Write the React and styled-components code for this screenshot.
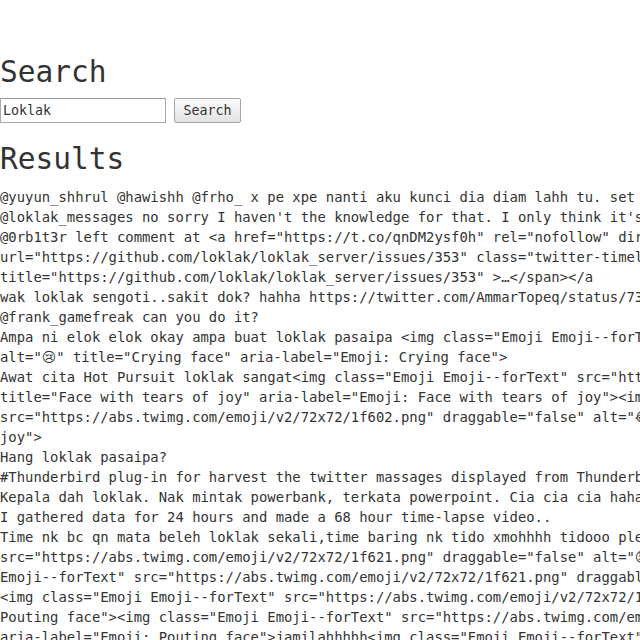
import React from "react";
import styled, { createGlobalStyle } from "styled-components";

const GlobalStyle = createGlobalStyle`
  html, body {
    margin: 0;
    padding: 0;
    background: #ffffff;
  }
  body {
    font-family: "DejaVu Sans Mono", monospace;
    color: #333333;
    overflow: hidden;
  }
`;

const Page = styled.main`
  display: flex;
  flex-direction: column;
  padding-top: 55px;
`;

const Heading = styled.h1`
  margin: 0;
  font-family: "DejaVu Sans Mono", monospace;
  font-weight: normal;
  font-size: 29.5px;
  line-height: 35px;
  color: #333333;
`;

const SearchForm = styled.form`
  display: flex;
  align-items: center;
  gap: 8px;
  margin: 8px 0 19px;
`;

const TextInput = styled.input`
  box-sizing: border-box;
  width: 166px;
  height: 25px;
  margin: 0;
  padding: 1px 2px;
  border: 1px solid #a9a9a9;
  border-top-color: #9a9a9a;
  background: #ffffff;
  font-family: "DejaVu Sans Mono", monospace;
  font-size: 13.333px;
  color: #333333;
  outline: none;
`;

const Button = styled.button`
  box-sizing: border-box;
  width: 67px;
  height: 25px;
  margin: 0;
  padding: 0 6px;
  border: 1px solid #a6a6a6;
  border-radius: 2px;
  background: linear-gradient(#fcfcfc, #e2e2e2);
  font-family: "DejaVu Sans Mono", monospace;
  font-size: 13.333px;
  color: #333333;
`;

const ResultList = styled.div`
  display: flex;
  flex-direction: column;
  margin-top: 10px;
  overflow: hidden;
`;

const Tweet = styled.div`
  white-space: pre;
  font-family: "DejaVu Sans Mono", "DejaVu Sans", monospace;
  font-variant-emoji: text;
  font-size: 13.88px;
  line-height: 20px;
  color: #333333;
`;

const CRY = "\u{1F622}\uFE0E";
const JOY = "\u{1F602}\uFE0E";
const POUT = "\u{1F621}\uFE0E";

const tweets = [
  "@yuyun_shhrul @hawishh @frho_ x pe xpe nanti aku kunci dia diam lahh tu. set kan je",
  "@loklak_messages no sorry I haven't the knowledge for that. I only think it's possible",
  '@0rb1t3r left comment at <a href="https://t.co/qnDM2ysf0h" rel="nofollow" dir="ltr" data-expanded-\nurl="https://github.com/loklak/loklak_server/issues/353" class="twitter-timeline-link" target="_blank"\ntitle="https://github.com/loklak/loklak_server/issues/353" >…</span></a',
  "wak loklak sengoti..sakit dok? hahha https://twitter.com/AmmarTopeq/status/731962528490799104",
  "@frank_gamefreak can you do it?",
  `Ampa ni elok elok okay ampa buat loklak pasaipa <img class="Emoji Emoji--forText" src="https://abs.twimg.com/emoji/v2/72x72/1f622.png" draggable="false"\nalt="${CRY}" title="Crying face" aria-label="Emoji: Crying face">`,
  `Awat cita Hot Pursuit loklak sangat<img class="Emoji Emoji--forText" src="https://abs.twimg.com/emoji/v2/72x72/1f602.png" draggable="false" alt="${JOY}"\ntitle="Face with tears of joy" aria-label="Emoji: Face with tears of joy"><img class="Emoji Emoji--forText"\nsrc="https://abs.twimg.com/emoji/v2/72x72/1f602.png" draggable="false" alt="${JOY}" title="Face with tears of\njoy">`,
  "Hang loklak pasaipa?",
  "#Thunderbird plug-in for harvest the twitter massages displayed from Thunderbird to loklak",
  "Kepala dah loklak. Nak mintak powerbank, terkata powerpoint. Cia cia cia hahaha",
  "I gathered data for 24 hours and made a 68 hour time-lapse video..",
  `Time nk bc qn mata beleh loklak sekali,time baring nk tido xmohhhh tidooo plerr<img class="Emoji\nsrc="https://abs.twimg.com/emoji/v2/72x72/1f621.png" draggable="false" alt="${POUT}" title="Pouting face"\nEmoji--forText" src="https://abs.twimg.com/emoji/v2/72x72/1f621.png" draggable="false" alt="${POUT}"\n<img class="Emoji Emoji--forText" src="https://abs.twimg.com/emoji/v2/72x72/1f621.png" draggable="false"\nPouting face"><img class="Emoji Emoji--forText" src="https://abs.twimg.com/emoji/v2/72x72/1f621.png"\naria-label="Emoji: Pouting face">jamilahhhhh<img class="Emoji Emoji--forText" src="https://abs.twimg.com/"`,
];

export default function App() {
  return (
    <>
      <GlobalStyle />
      <Page>
        <Heading>Search</Heading>
        <SearchForm onSubmit={(e) => e.preventDefault()}>
          <TextInput type="text" defaultValue="Loklak" />
          <Button type="submit">Search</Button>
        </SearchForm>
        <Heading>Results</Heading>
        <ResultList>
          {tweets.map((t, i) => (
            <Tweet key={i}>{t}</Tweet>
          ))}
        </ResultList>
      </Page>
    </>
  );
}
